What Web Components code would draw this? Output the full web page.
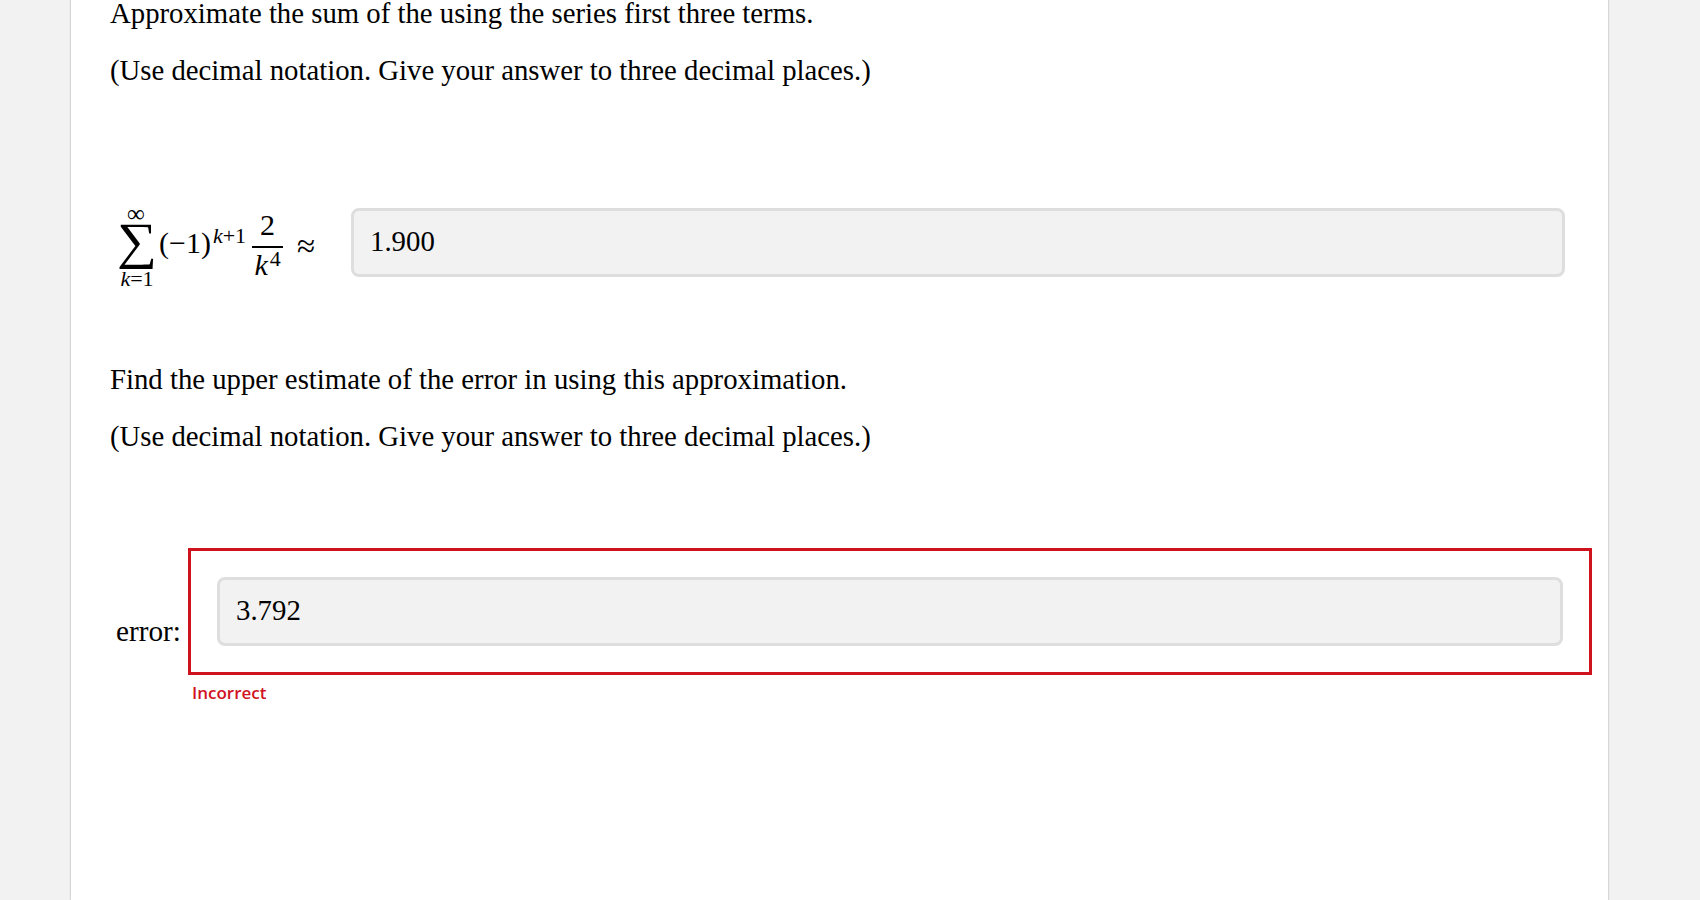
<!DOCTYPE html>
<html lang="en">
<head>
<meta charset="utf-8">
<title>Alternating series estimate</title>
<style>
html, body { margin: 0; height: 100%; overflow: hidden; background: #f2f2f2; }
</style>
</head>
<body>
<question-card>
  <question-text>Approximate the sum of the using the series first three terms.</question-text>
  <question-text>(Use decimal notation. Give your answer to three decimal places.)</question-text>
  <answer-row style="margin-top:122px">
    <series-math></series-math>
    <answer-field value="1.900" style="width:1214px"></answer-field>
  </answer-row>
  <question-text style="margin-top:86px">Find the upper estimate of the error in using this approximation.</question-text>
  <question-text>(Use decimal notation. Give your answer to three decimal places.)</question-text>
  <error-row style="margin-top:96px" label="error:" value="3.792" message="Incorrect"></error-row>
</question-card>

<script>
class QuestionCard extends HTMLElement {
  constructor() {
    super()
    this.attachShadow({ mode: "open" }).innerHTML = `
<style>
:host{
  display: block;
  box-sizing: border-box;
  width: 1537px;
  height: 904px;
  margin: -3px 0 0 71px;
  padding: 0 0 0 39px;
  background: #fff;
  box-shadow: 0 0 2px rgba(0,0,0,.35);
  color: #000;
  font-family: "Liberation Serif", "Times New Roman", serif;
  font-size: 28.75px;
}
</style>
<slot></slot>`
  }
}
customElements.define("question-card", QuestionCard)

class QuestionText extends HTMLElement {
  constructor() {
    super()
    this.attachShadow({ mode: "open" }).innerHTML = `
<style>
:host{
  display: block;
  line-height: 32px;
  margin-bottom: 25px;
}
</style>
<slot></slot>`
  }
}
customElements.define("question-text", QuestionText)

class AnswerRow extends HTMLElement {
  constructor() {
    super()
    this.attachShadow({ mode: "open" }).innerHTML = `
<style>
:host{
  display: flex;
  align-items: center;
  height: 69px;
}
</style>
<slot></slot>`
  }
}
customElements.define("answer-row", AnswerRow)

class AnswerField extends HTMLElement {
  static get observedAttributes() { return ["value"] }
  constructor() {
    super()
    this.attachShadow({ mode: "open" }).innerHTML = `
<style>
:host{
  display: block;
  box-sizing: border-box;
  height: 69px;
  padding: 0 16px;
  background: #f2f2f2;
  border: 3px solid #dedede;
  border-radius: 8px;
  font-size: 28.8px;
  line-height: 61px;
}
</style>
<span id="v"></span>`
  }
  attributeChangedCallback(name, old, val) {
    this.shadowRoot.querySelector("#v").textContent = val
  }
}
customElements.define("answer-field", AnswerField)

class ErrorRow extends HTMLElement {
  constructor() {
    super()
    this.attachShadow({ mode: "open" }).innerHTML = `
<style>
:host{
  display: flex;
  align-items: flex-start;
}
.label{
  width: 78px;
  padding: 67px 0 0 6px;
  box-sizing: border-box;
  font-size: 29.2px;
  line-height: 32px;
}
.box{
  box-sizing: border-box;
  width: 1404px;
  height: 127px;
  padding: 26px 0 0 26px;
  border: 3px solid #d0121f;
}
.msg{
  margin: 7px 0 0 4px;
  color: #d0121f;
  font: 600 17px/22px "Open Sans", sans-serif;
}
</style>
<div class="label"></div>
<div>
  <div class="box"><answer-field style="width:1346px"></answer-field></div>
  <div class="msg"></div>
</div>`
  }
  connectedCallback() {
    this.shadowRoot.querySelector(".label").textContent = this.getAttribute("label")
    this.shadowRoot.querySelector("answer-field").setAttribute("value", this.getAttribute("value"))
    this.shadowRoot.querySelector(".msg").textContent = this.getAttribute("message")
  }
}
customElements.define("error-row", ErrorRow)

class SeriesMath extends HTMLElement {
  constructor() {
    super()
    this.attachShadow({ mode: "open" }).innerHTML = `
<style>
:host{
  display: flex;
  align-items: center;
  width: 241px;
  padding-left: 10px;
  box-sizing: border-box;
  font-size: 30px;
  line-height: 30px;
}
.sum{
  display: flex;
  flex-direction: column;
  align-items: center;
  width: 34px;
  font-size: 22px;
  line-height: 20px;
}
.inf{ font-size: 25px; padding-top: 7px; margin-bottom: -7px; margin-right: 2px; }
.sigma{
  display: block;
  height: 52px;
  font-size: 51px;
  line-height: 48px;
  transform: scaleX(1.1);
}
.term{ display: flex; align-items: flex-start; margin-left: 5px; padding-top: 1px; }
sup{ font-size: 22px; line-height: 22px; position: relative; top: -3px; vertical-align: baseline; margin-left: 2px; }
.frac{
  display: flex;
  flex-direction: column;
  align-items: center;
  width: 31px;
  margin-left: 6px;
  padding-top: 5px;
}
.num{ padding-bottom: 6px; border-bottom: 2px solid #000; width: 100%; text-align: center; }
.den{ white-space: nowrap; padding-top: 2px; }
.den sup{ top: -9px; margin-left: 2px; }
.approx{ margin-left: 14px; padding-top: 6px; font-size: 33px; }
</style>
<div class="sum"><span class="inf">∞</span><span class="sigma">∑</span><span><i>k</i>=1</span></div>
<div class="term">(−1)<sup><i>k</i>+1</sup></div>
<div class="frac"><span class="num">2</span><span class="den"><i>k</i><sup>4</sup></span></div>
<div class="approx">≈</div>`
  }
}
customElements.define("series-math", SeriesMath)
</script>
</body>
</html>
